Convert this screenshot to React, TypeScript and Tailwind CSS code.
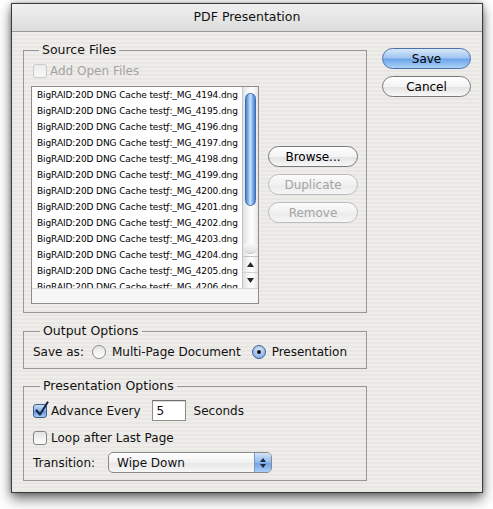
import * as React from "react";

const files = Array.from({ length: 13 }, (_, i) => `BigRAID:20D DNG Cache testƒ:_MG_${4194 + i}.dng`);

export default function App() {
  return (
    <div className="min-h-[509px] bg-white pl-[11px] pt-[3px] font-['DejaVu_Sans',sans-serif] text-[12px] text-[#111]">
      <div className="w-[472px] border border-[#3a3a3a] bg-[repeating-linear-gradient(180deg,#efedea_0px,#efedea_2px,#e9e7e4_2px,#e9e7e4_4px)] shadow-[0_6px_12px_rgba(0,0,0,0.55),0_0_5px_rgba(0,0,0,0.3)]">
        {/* title bar */}
        <div className="flex h-[28px] items-center justify-center border-b border-[#9a9a9a] bg-gradient-to-b from-[#f0f0f0] to-[#dcdcdc] text-[12.5px]">
          PDF Presentation
        </div>

        <div className="flex gap-[15px] px-[11px] pb-[11px]">
          <div className="w-[344px] pt-[10px]">
            {/* Source files */}
            <fieldset className="border border-[#979797] pb-[8px] pl-[7px] pr-[8px] pt-[5px]">
              <legend className="ml-[8px] px-[3px] text-[12.5px] leading-[16px]">Source Files</legend>
              <div className="ml-[2px] flex h-[16px] items-center gap-[3px] text-[#a3a3a3]">
                <Check disabled />
                <span>Add Open Files</span>
              </div>
              <div className="mt-[7px] flex gap-[9px]">
                <FileList />
                <div className="flex w-[90px] flex-col gap-[7px] pt-[60px]">
                  <Pill>Browse...</Pill>
                  <Pill disabled>Duplicate</Pill>
                  <Pill disabled>Remove</Pill>
                </div>
              </div>
            </fieldset>

            {/* Output options */}
            <fieldset className="mt-[10px] border border-[#979797] pb-[8px] pl-[9px] pt-[5px]">
              <legend className="ml-[7px] px-[3px] text-[12.5px] leading-[16px]">Output Options</legend>
              <div className="flex h-[16px] items-center">
                <span>Save as:</span>
                <span className="ml-[8px]"><Radio /></span>
                <span className="ml-[6px]">Multi-Page Document</span>
                <span className="ml-[11px]"><Radio on /></span>
                <span className="ml-[6px]">Presentation</span>
              </div>
            </fieldset>

            {/* Presentation options */}
            <fieldset className="mt-[9px] border border-[#979797] pb-[7px] pl-[9px] pt-[6px]">
              <legend className="ml-[7px] px-[3px] text-[12.5px] leading-[16px]">Presentation Options</legend>
              <div className="flex h-[21px] items-center">
                <Check on />
                <span className="ml-[4px]">Advance Every</span>
                <div className="ml-[11px] flex h-[21px] w-[34px] items-center border border-[#8d8d8d] border-t-[#6f6f6f] bg-white pl-[4px] shadow-[inset_0_1px_1px_rgba(0,0,0,0.15)]">
                  5
                </div>
                <span className="ml-[8px]">Seconds</span>
              </div>
              <div className="mt-[9px] flex h-[16px] items-center">
                <Check />
                <span className="ml-[4px]">Loop after Last Page</span>
              </div>
              <div className="mt-[6px] flex h-[21px] items-center">
                <span>Transition:</span>
                <div className="ml-[13px] flex h-[21px] w-[164px] items-center overflow-hidden rounded-[5px] border border-[#8a8a8a] bg-[linear-gradient(180deg,#ffffff,#f1f1f1_50%,#e6e6e6_51%,#f7f7f7)]">
                  <span className="flex-1 pl-[8px]">Wipe Down</span>
                  <span className="flex h-full w-[17px] flex-col items-center justify-center gap-[2px] border-l border-[#7b95bd] bg-[linear-gradient(180deg,#d2e3f8,#8fb8ee_50%,#6c9fe4_51%,#aacdf6)]">
                    <svg width="6" height="4" viewBox="0 0 6 4"><path d="M0 4 L3 0 L6 4Z" fill="#1e2a3a" /></svg>
                    <svg width="6" height="4" viewBox="0 0 6 4"><path d="M0 0 L3 4 L6 0Z" fill="#1e2a3a" /></svg>
                  </span>
                </div>
              </div>
            </fieldset>
          </div>

          <div className="flex w-[89px] flex-col gap-[7px] pt-[16px]">
            <Pill primary>Save</Pill>
            <Pill>Cancel</Pill>
          </div>
        </div>
      </div>
    </div>
  );
}

function FileList() {
  return (
    <div className="flex h-[218px] w-[228px] flex-col border border-[#8c8c8c] bg-white">
      <div className="flex h-[201px]">
        <div className="flex-1 overflow-hidden pl-[5px] text-[9px] leading-[16px] tracking-[-0.1px] text-black">
          {files.map((f) => (
            <div key={f} className="whitespace-nowrap">{f}</div>
          ))}
        </div>
        <div className="flex w-[16px] flex-col border-l border-[#c4c4c4] bg-[linear-gradient(90deg,#e2e2e2,#f8f8f8_40%,#ffffff_60%,#e6e6e6)]">
          <div className="mx-[2px] mt-[6px] h-[113px] rounded-full border border-[#3d6fb5] bg-[linear-gradient(90deg,#4a80cf,#a3c8f4_35%,#c8def9_50%,#7eaeea_75%,#467bca)]" />
          <div className="flex-1" />
          <div className="mx-[1px] h-[10px] rounded-b-[8px] border-b border-[#bcbcbc] bg-[linear-gradient(180deg,#f6f6f6,#e0e0e0)]" />
          <div className="mt-[2px] flex h-[16px] items-center justify-center border-t border-[#c4c4c4]">
            <svg width="7" height="5" viewBox="0 0 7 5"><path d="M0 5 L3.5 0 L7 5Z" fill="#2a2a2a" /></svg>
          </div>
          <div className="flex h-[16px] items-center justify-center border-t border-[#d2d2d2]">
            <svg width="7" height="5" viewBox="0 0 7 5"><path d="M0 0 L3.5 5 L7 0Z" fill="#2a2a2a" /></svg>
          </div>
        </div>
      </div>
      <div className="flex-1 border-t border-[#d8d8d8] bg-[#f6f6f6]" />
    </div>
  );
}

function Pill({ children, disabled, primary }: { children: React.ReactNode; disabled?: boolean; primary?: boolean }) {
  if (primary) {
    return (
      <div className="flex h-[21px] items-center justify-center rounded-full border border-[#4a72a8] bg-[linear-gradient(180deg,#d9e8fa_0%,#a2c6f1_45%,#6ea6e9_55%,#acd2f8_100%)] text-black">
        {children}
      </div>
    );
  }
  if (disabled) {
    return (
      <div className="flex h-[21px] items-center justify-center rounded-full border border-[#bcbcbc] bg-[linear-gradient(180deg,#fbfbfb,#f1f1f1_50%,#ebebeb_51%,#f6f6f6)] text-[#a3a3a3]">
        {children}
      </div>
    );
  }
  return (
    <div className="flex h-[21px] items-center justify-center rounded-full border border-[#7a7a7a] bg-[linear-gradient(180deg,#ffffff,#f3f3f3_50%,#e2e2e2_51%,#f8f8f8)] text-black">
      {children}
    </div>
  );
}

function Check({ on, disabled }: { on?: boolean; disabled?: boolean }) {
  if (on) {
    return (
      <span className="relative h-[14px] w-[14px] shrink-0 rounded-[3px] border border-[#3f5f8f] bg-[linear-gradient(180deg,#c9ddf6,#86b1e8_50%,#5f95df_51%,#a8cbf4)]">
        <svg className="absolute left-[0px] top-[-4px]" width="15" height="16" viewBox="0 0 15 16">
          <path d="M2.5 9.5 L6 13.5 L13.5 1.5" stroke="#1b2a44" strokeWidth="2.2" fill="none" strokeLinecap="round" strokeLinejoin="round" />
        </svg>
      </span>
    );
  }
  if (disabled) {
    return <span className="h-[14px] w-[14px] shrink-0 rounded-[3px] border border-[#c9c9c9] bg-[linear-gradient(180deg,#ececec,#f8f8f8)]" />;
  }
  return <span className="h-[14px] w-[14px] shrink-0 rounded-[3px] border border-[#858585] bg-[linear-gradient(180deg,#e4e4e4,#ffffff)]" />;
}

function Radio({ on }: { on?: boolean }) {
  if (on) {
    return (
      <span className="flex h-[14px] w-[14px] items-center justify-center rounded-full border border-[#3f5f8f] bg-[radial-gradient(circle_at_50%_35%,#dbe9fb,#6c9ee0)]">
        <span className="h-[4px] w-[4px] rounded-full bg-[#111]" />
      </span>
    );
  }
  return <span className="block h-[14px] w-[14px] rounded-full border border-[#8a8a8a] bg-[linear-gradient(180deg,#e4e4e4,#ffffff)]" />;
}
